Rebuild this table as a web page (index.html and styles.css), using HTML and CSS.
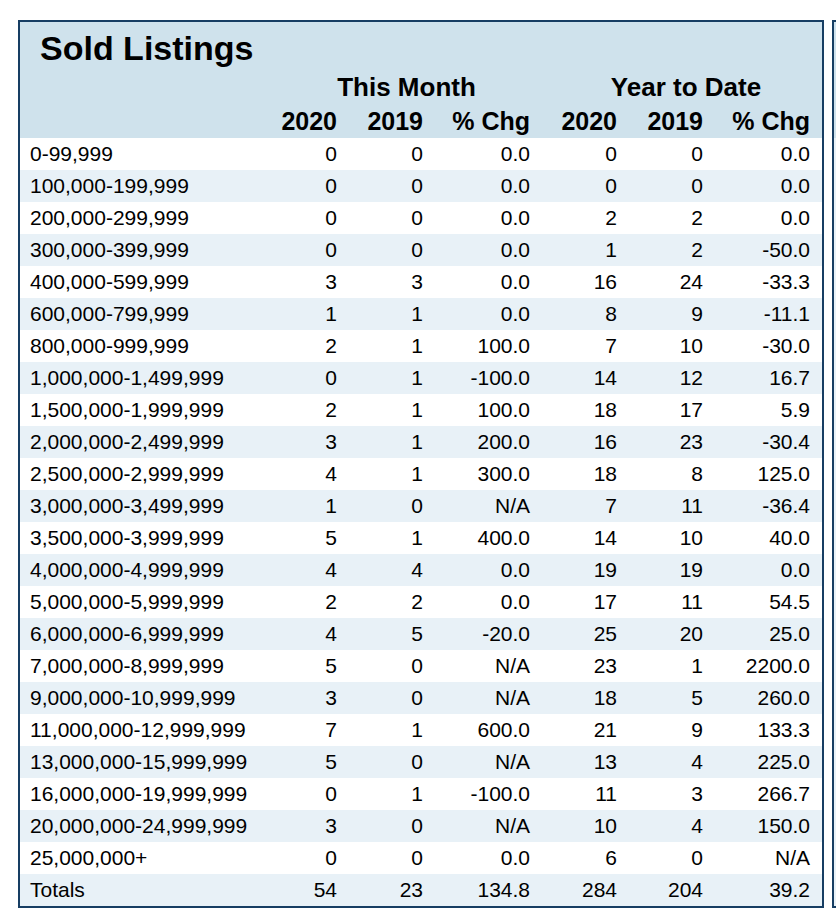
FILE: index.html
```html
<!DOCTYPE html>
<html lang="en">
<head>
<meta charset="utf-8">
<title>Sold Listings</title>
<link rel="stylesheet" href="styles.css">
</head>
<body>
<div class="row">
  <section class="panel">
    <h2 class="title">Sold Listings</h2>
    <table class="stats">
      <colgroup>
        <col class="c-label"><col class="c-num"><col class="c-num"><col class="c-pct"><col class="c-num2"><col class="c-num"><col class="c-pct">
      </colgroup>
      <thead>
        <tr class="group">
          <th></th>
          <th colspan="3" class="span">This Month</th>
          <th colspan="3" class="span">Year to Date</th>
        </tr>
        <tr class="years">
          <th></th>
          <th>2020</th><th>2019</th><th>% Chg</th>
          <th>2020</th><th>2019</th><th>% Chg</th>
        </tr>
      </thead>
      <tbody>
        <tr><td>0-99,999</td><td>0</td><td>0</td><td>0.0</td><td>0</td><td>0</td><td>0.0</td></tr>
        <tr><td>100,000-199,999</td><td>0</td><td>0</td><td>0.0</td><td>0</td><td>0</td><td>0.0</td></tr>
        <tr><td>200,000-299,999</td><td>0</td><td>0</td><td>0.0</td><td>2</td><td>2</td><td>0.0</td></tr>
        <tr><td>300,000-399,999</td><td>0</td><td>0</td><td>0.0</td><td>1</td><td>2</td><td>-50.0</td></tr>
        <tr><td>400,000-599,999</td><td>3</td><td>3</td><td>0.0</td><td>16</td><td>24</td><td>-33.3</td></tr>
        <tr><td>600,000-799,999</td><td>1</td><td>1</td><td>0.0</td><td>8</td><td>9</td><td>-11.1</td></tr>
        <tr><td>800,000-999,999</td><td>2</td><td>1</td><td>100.0</td><td>7</td><td>10</td><td>-30.0</td></tr>
        <tr><td>1,000,000-1,499,999</td><td>0</td><td>1</td><td>-100.0</td><td>14</td><td>12</td><td>16.7</td></tr>
        <tr><td>1,500,000-1,999,999</td><td>2</td><td>1</td><td>100.0</td><td>18</td><td>17</td><td>5.9</td></tr>
        <tr><td>2,000,000-2,499,999</td><td>3</td><td>1</td><td>200.0</td><td>16</td><td>23</td><td>-30.4</td></tr>
        <tr><td>2,500,000-2,999,999</td><td>4</td><td>1</td><td>300.0</td><td>18</td><td>8</td><td>125.0</td></tr>
        <tr><td>3,000,000-3,499,999</td><td>1</td><td>0</td><td>N/A</td><td>7</td><td>11</td><td>-36.4</td></tr>
        <tr><td>3,500,000-3,999,999</td><td>5</td><td>1</td><td>400.0</td><td>14</td><td>10</td><td>40.0</td></tr>
        <tr><td>4,000,000-4,999,999</td><td>4</td><td>4</td><td>0.0</td><td>19</td><td>19</td><td>0.0</td></tr>
        <tr><td>5,000,000-5,999,999</td><td>2</td><td>2</td><td>0.0</td><td>17</td><td>11</td><td>54.5</td></tr>
        <tr><td>6,000,000-6,999,999</td><td>4</td><td>5</td><td>-20.0</td><td>25</td><td>20</td><td>25.0</td></tr>
        <tr><td>7,000,000-8,999,999</td><td>5</td><td>0</td><td>N/A</td><td>23</td><td>1</td><td>2200.0</td></tr>
        <tr><td>9,000,000-10,999,999</td><td>3</td><td>0</td><td>N/A</td><td>18</td><td>5</td><td>260.0</td></tr>
        <tr><td>11,000,000-12,999,999</td><td>7</td><td>1</td><td>600.0</td><td>21</td><td>9</td><td>133.3</td></tr>
        <tr><td>13,000,000-15,999,999</td><td>5</td><td>0</td><td>N/A</td><td>13</td><td>4</td><td>225.0</td></tr>
        <tr><td>16,000,000-19,999,999</td><td>0</td><td>1</td><td>-100.0</td><td>11</td><td>3</td><td>266.7</td></tr>
        <tr><td>20,000,000-24,999,999</td><td>3</td><td>0</td><td>N/A</td><td>10</td><td>4</td><td>150.0</td></tr>
        <tr><td>25,000,000+</td><td>0</td><td>0</td><td>0.0</td><td>6</td><td>0</td><td>N/A</td></tr>
        <tr class="totals"><td>Totals</td><td>54</td><td>23</td><td>134.8</td><td>284</td><td>204</td><td>39.2</td></tr>
      </tbody>
    </table>
  </section>
  <section class="panel-next" aria-hidden="true">
    <div class="next-head"></div>
  </section>
</div>
</body>
</html>
```

FILE: styles.css
```css
html, body {
  margin: 0;
  padding: 0;
  background: #ffffff;
  overflow: hidden;
}

body {
  font-family: "Liberation Sans", Arial, Helvetica, sans-serif;
  color: #000000;
  padding: 20px 0 0 18px;
}

.row {
  display: flex;
  gap: 8px;
  align-items: stretch;
  width: 818px;
  overflow: hidden;
}

.panel {
  flex: 0 0 auto;
  width: 802px;
  border: 2px solid #173e63;
  background: #cfe2ec;
}

.panel-next {
  flex: 1 1 auto;
  min-width: 0;
  border: 2px solid #173e63;
  border-right: 0;
  background: #e8f1f7;
}

.next-head {
  height: 116px;
  background: #cfe2ec;
}

.title {
  margin: 0;
  height: 48px;
  box-sizing: border-box;
  padding: 6px 0 0 20px;
  font-size: 34px;
  line-height: 40px;
  font-weight: 700;
}

.stats {
  width: 802px;
  table-layout: fixed;
  border-collapse: collapse;
  border-spacing: 0;
}

.c-label { width: 243px; }
.c-num { width: 86px; }
.c-num2 { width: 87px; }
.c-pct { width: 107px; }

.stats th,
.stats td {
  padding: 0 12px 0 0;
  text-align: right;
  white-space: nowrap;
}

.group th {
  height: 34px;
  font-size: 26px;
  line-height: 34px;
  font-weight: 700;
}

.group th.span {
  text-align: center;
  padding: 0 0 0 8px;
}

.years th {
  height: 34px;
  font-size: 25px;
  line-height: 34px;
  font-weight: 700;
}

.stats tbody td {
  height: 32px;
  font-size: 21px;
  line-height: 32px;
  background: #ffffff;
}

.stats tbody tr:nth-child(even) td {
  background: #e8f1f7;
}

.stats tbody td:first-child {
  text-align: left;
  padding: 0 0 0 10px;
}
```
